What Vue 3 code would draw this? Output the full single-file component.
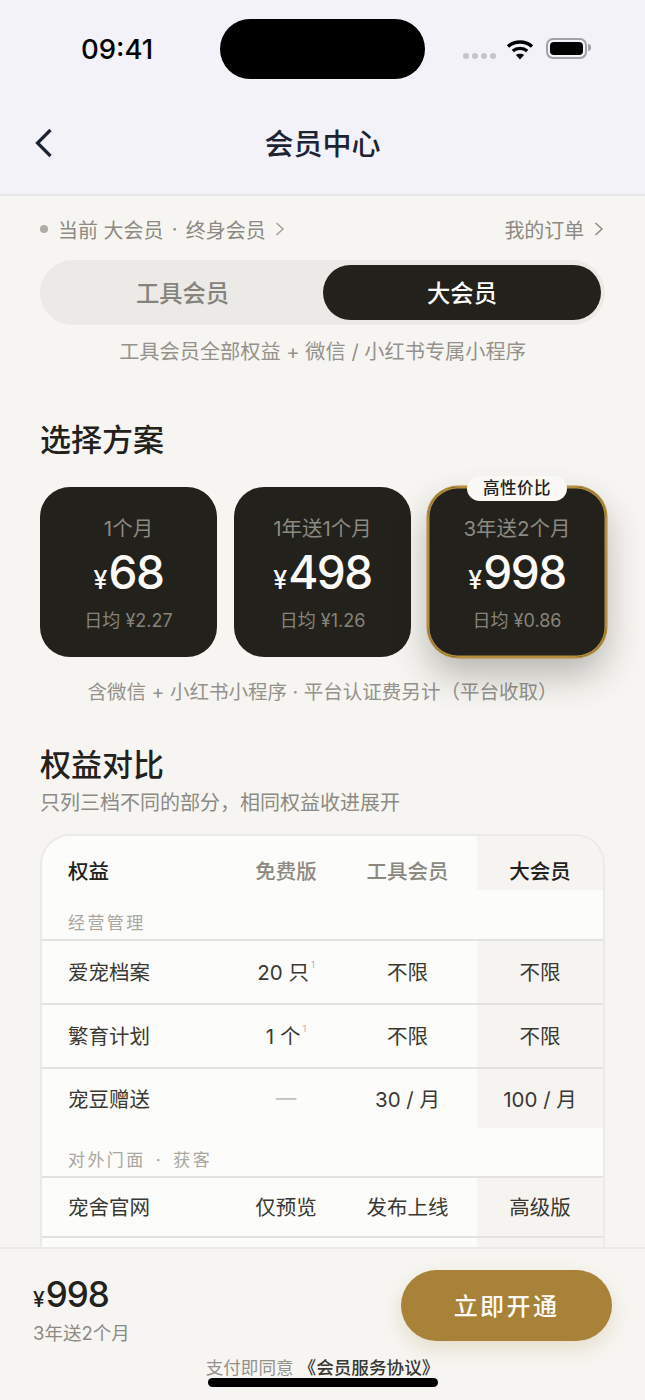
<script setup>
const plans = [
  { id: 1, name: '1个月', price: '68', daily: '日均 ¥2.27' },
  { id: 2, name: '1年送1个月', price: '498', daily: '日均 ¥1.26' },
  { id: 3, name: '3年送2个月', price: '998', daily: '日均 ¥0.86', best: true }
]

const manageRows = [
  { name: '爱宠档案', free: '20 只', note: '1', tool: '不限', big: '不限' },
  { name: '繁育计划', free: '1 个', note: '1', tool: '不限', big: '不限' },
  { name: '宠豆赠送', free: '—', tool: '30 / 月', big: '100 / 月', muted: true, last: true }
]

const shopRows = [
  { name: '宠舍官网', free: '仅预览', tool: '发布上线', big: '高级版' },
  { name: '', free: '', tool: '', big: '' }
]
</script>

<template>
  <div class="page">
    <header class="top">
      <div class="status">
        <span class="time">09:41</span>
        <span class="island"></span>
        <div class="status-icons">
          <span class="dots"><i></i><i></i><i></i><i></i></span>
          <svg class="wifi" width="28" height="22" viewBox="0 0 28 22" fill="none" stroke="#000" stroke-width="3.4">
            <path d="M2 8.6C8.6 2.4 19.4 2.4 26 8.6" />
            <path d="M6.8 13C10.8 9.5 17.2 9.5 21.2 13" />
            <path d="M14 21.4 9.9 17.1C12.2 15.3 15.8 15.3 18.1 17.1Z" fill="#000" stroke="none" />
          </svg>
          <span class="battery"><i></i></span>
        </div>
      </div>
      <div class="nav">
        <svg class="back" width="20" height="32" viewBox="0 0 20 32" fill="none" stroke="#1c2333" stroke-width="3.2">
          <path d="M16.5 3 3.5 16l13 13" />
        </svg>
        <h1>会员中心</h1>
      </div>
    </header>

    <main class="content">
      <div class="current">
        <span class="current-left">
          <i class="dot"></i>当前 大会员 <span class="sep">·</span> 终身会员
          <svg class="chev" width="10" height="16" viewBox="0 0 10 16" fill="none" stroke="#a3a19a" stroke-width="1.5">
            <path d="M1.5 2 8 8l-6.5 6" />
          </svg>
        </span>
        <span class="current-right">
          我的订单
          <svg class="chev right" width="10" height="16" viewBox="0 0 10 16" fill="none" stroke="#8c8a83" stroke-width="1.5">
            <path d="M1.5 2 8 8l-6.5 6" />
          </svg>
        </span>
      </div>
      <div class="toggle">
        <span class="tab">工具会员</span>
        <span class="tab active">大会员</span>
      </div>
      <p class="toggle-note">工具会员全部权益 + 微信 / 小红书专属小程序</p>

      <h2 class="plans-title">选择方案</h2>
      <div class="plans">
        <div v-for="p in plans" :key="p.id" class="plan" :class="{ best: p.best }">
          <span v-if="p.best" class="badge">高性价比</span>
          <span class="plan-name">{{ p.name }}</span>
          <span class="plan-price"><small>¥</small>{{ p.price }}</span>
          <span class="plan-daily">{{ p.daily }}</span>
        </div>
      </div>
      <p class="plans-note">含微信 + 小红书小程序 · 平台认证费另计（平台收取）</p>

      <h2 class="compare-title">权益对比</h2>
      <p class="compare-sub">只列三档不同的部分，相同权益收进展开</p>

      <div class="table">
        <div class="row head">
          <span class="c-name">权益</span>
          <span class="c-free">免费版</span>
          <span class="c-tool">工具会员</span>
          <span class="c-big">大会员</span>
        </div>
        <div class="section first">经营管理</div>
        <div v-for="r in manageRows" :key="r.name" class="row line" :class="{ last: r.last }">
          <span class="c-name">{{ r.name }}</span>
          <span class="c-free" :class="{ muted: r.muted }">{{ r.free }}<sup v-if="r.note">{{ r.note }}</sup></span>
          <span class="c-tool">{{ r.tool }}</span>
          <span class="c-big">{{ r.big }}</span>
        </div>
        <div class="section">对外门面 · 获客</div>
        <div v-for="(r, i) in shopRows" :key="i" class="row line shop">
          <span class="c-name">{{ r.name }}</span>
          <span class="c-free">{{ r.free }}</span>
          <span class="c-tool">{{ r.tool }}</span>
          <span class="c-big">{{ r.big }}</span>
        </div>
      </div>
    </main>

    <footer class="bar">
      <div class="bar-main">
        <div>
          <div class="bar-price"><small>¥</small>998</div>
          <div class="bar-plan">3年送2个月</div>
        </div>
        <button class="buy">立即开通</button>
      </div>
      <p class="agree">支付即同意 <b>《会员服务协议》</b></p>
      <span class="home"></span>
    </footer>
  </div>
</template>

<style scoped>
.page {
  position: relative;
  width: 645px;
  height: 1400px;
  overflow: hidden;
  background: #f6f5f1;
  color: #23211c;
  font-family: 'Inter', 'Noto Sans CJK SC', sans-serif;
}

.top {
  height: 194px;
  background: #f2f2f8;
  border-bottom: 2px solid #e6e6ea;
}

.status {
  display: flex;
  align-items: center;
  height: 97px;
  padding: 0 53px 0 81px;
}

.time {
  width: 139px;
  font-size: 27.5px;
  font-weight: 500;
  color: #000;
}

.island {
  width: 205px;
  height: 60px;
  border-radius: 30px;
  background: #000;
}

.status-icons {
  display: flex;
  align-items: center;
  margin-left: 38px;
}

.dots {
  display: flex;
  gap: 3px;
  margin-top: 14px;
}

.dots i {
  width: 6px;
  height: 6px;
  border-radius: 50%;
  background: #c4c4c8;
}

.wifi {
  margin: 0 12px 0 10px;
}

.battery {
  position: relative;
  width: 41px;
  height: 21px;
  padding: 2px;
  box-sizing: border-box;
  border: 2px solid #a2a2a6;
  border-radius: 7px;
}

.battery i {
  display: block;
  height: 100%;
  border-radius: 4px;
  background: #000;
}

.battery::after {
  content: '';
  position: absolute;
  right: -6px;
  top: 4px;
  width: 3px;
  height: 7px;
  border-radius: 0 3px 3px 0;
  background: #a2a2a6;
}

.nav {
  position: relative;
  display: flex;
  align-items: center;
  justify-content: center;
  height: 89px;
}

.nav h1 {
  margin: 0;
  font-size: 29px;
  font-weight: 500;
  color: #1c2333;
}

.back {
  position: absolute;
  left: 34px;
  top: 30px;
}

.content {
  padding: 0 40px;
}

.current {
  display: flex;
  justify-content: space-between;
  align-items: center;
  height: 28px;
  margin-top: 19px;
  font-size: 20px;
  color: #8c8a83;
}

.current-left,
.current-right {
  display: flex;
  align-items: center;
  white-space: pre;
}

.sep {
  margin: 0 2.5px;
}

.chev {
  margin-left: 4px;
}

.chev.right {
  margin-left: 4px;
}

.current-right {
  margin-right: 1px;
}

.dot {
  width: 8px;
  height: 8px;
  margin-right: 10px;
  border-radius: 50%;
  background: #aeaca6;
}

.toggle {
  display: grid;
  grid-template-columns: 1fr 278px;
  height: 65px;
  margin-top: 17px;
  padding: 5px 4px 5px 0;
  box-sizing: border-box;
  border-radius: 33px;
  background: #eceae6;
}

.tab {
  display: flex;
  align-items: center;
  justify-content: center;
  padding: 0 0 2px 2px;
  font-size: 23.3px;
  font-weight: 500;
  color: #85837b;
}

.tab.active {
  padding-left: 0;
  border-radius: 28px;
  background: #23211c;
  color: #fbfaf7;
}

.toggle-note {
  margin: 12px 0 0;
  font-size: 20.2px;
  line-height: 30px;
  text-align: center;
  color: #94928b;
}

h2 {
  margin: 0;
  font-size: 31px;
  font-weight: 500;
  color: #23211c;
}

.plans-title {
  margin-top: 51px;
  line-height: 44px;
}

.plans {
  display: grid;
  grid-template-columns: 177px 177px 178px;
  gap: 17px;
  margin-top: 25px;
}

.plan {
  position: relative;
  display: flex;
  flex-direction: column;
  align-items: center;
  height: 170px;
  padding-top: 28px;
  box-sizing: border-box;
  border-radius: 30px;
  background: #23211c;
}

.plan.best {
  box-shadow: 0 0 0 1.5px #b48e3e, inset 0 0 0 1.5px #b48e3e, 0 18px 36px rgba(35, 33, 28, 0.3);
}

.badge {
  position: absolute;
  top: -11px;
  left: 39px;
  width: 100px;
  height: 25px;
  border-radius: 14px;
  background: #f9f8f5;
  color: #23211c;
  font-size: 16.5px;
  font-weight: 500;
  letter-spacing: 0.5px;
  line-height: 24px;
  text-align: center;
}

.plan-name {
  font-size: 20.5px;
  line-height: 28px;
  color: #8c8a80;
}

.plan-price {
  font-size: 46px;
  font-weight: 500;
  letter-spacing: -1.5px;
  line-height: 58px;
  color: #fbfaf7;
}

.plan-price small {
  margin-right: 1px;
  font-size: 25px;
  letter-spacing: 0;
}

.plan-daily {
  margin-top: -1px;
  font-size: 18px;
  line-height: 26px;
  color: #86847a;
}

.plans-note {
  margin: 20px 0 0;
  font-size: 19.55px;
  line-height: 30px;
  text-align: center;
  color: #94928b;
}

.compare-title {
  margin-top: 36px;
  line-height: 44px;
}

.compare-sub {
  margin: 2px 0 0;
  font-size: 20px;
  line-height: 28px;
  color: #8c8a83;
}

.table {
  margin-top: 17px;
  border: 2px solid #ebeae6;
  border-bottom: none;
  border-radius: 30px 30px 0 0;
  background: #fcfcfa;
  overflow: hidden;
}

.row {
  display: grid;
  grid-template-columns: 183px 122px 130px 1fr;
  font-size: 20.5px;
  color: #3a3833;
}

.row span {
  display: flex;
  align-items: center;
  justify-content: center;
  padding-bottom: 2px;
  white-space: pre;
}

.row .c-name {
  justify-content: flex-start;
  padding-left: 26px;
}

.row .c-tool {
  padding-right: 9px;
}

.row .c-big {
  background: #f5f4f0;
}

.head {
  height: 54px;
  font-weight: 500;
  color: #8c8a80;
}

.row.head span {
  padding-top: 13px;
  padding-bottom: 0;
}

.head .c-name,
.head .c-big {
  color: #23211c;
}

.line {
  height: 62px;
  border-top: 2px solid #e3e2de;
}

.line.last {
  height: 59px;
}

.line.shop {
  height: 58px;
}

.section {
  height: 48px;
  padding: 22px 0 0 26px;
  box-sizing: border-box;
  font-size: 17px;
  line-height: 20px;
  letter-spacing: 2.4px;
  word-spacing: 3px;
  color: #a9a7a0;
}

.section.first {
  height: 49px;
  padding-top: 23px;
}

.muted {
  color: #c4c2bc;
}

sup {
  align-self: flex-start;
  margin: 19px 0 0 2px;
  font-size: 9px;
  line-height: 10px;
  color: #b5b3ac;
}

.bar {
  position: absolute;
  left: 0;
  right: 0;
  bottom: 0;
  height: 153px;
  box-sizing: border-box;
  border-top: 2px solid #ebeae6;
  background: #f6f5f1;
}

.bar-main {
  display: flex;
  justify-content: space-between;
  padding: 21px 33px 0;
}

.bar-price {
  margin-top: 3px;
  font-size: 35px;
  font-weight: 500;
  letter-spacing: -1px;
  line-height: 42px;
  color: #23211c;
}

.bar-price small {
  margin-right: 1px;
  font-size: 21px;
  letter-spacing: 0;
}

.bar-plan {
  margin-top: -1px;
  font-size: 18.5px;
  line-height: 26px;
  color: #8c8a83;
}

.buy {
  width: 211px;
  height: 71px;
  padding-bottom: 3px;
  border: none;
  border-radius: 36px;
  background: #a88238;
  box-shadow: 0 8px 20px rgba(168, 130, 56, 0.2);
  color: #fbfaf7;
  font-family: inherit;
  font-size: 24px;
  font-weight: 500;
  letter-spacing: 2.4px;
}

.agree {
  margin: 9px 0 0;
  font-size: 17.6px;
  line-height: 26px;
  text-align: center;
  color: #94928b;
}

.agree b {
  font-weight: 500;
  color: #3a3833;
}

.home {
  position: absolute;
  left: 208px;
  bottom: 13px;
  width: 230px;
  height: 9px;
  border-radius: 5px;
  background: #000;
}
</style>
